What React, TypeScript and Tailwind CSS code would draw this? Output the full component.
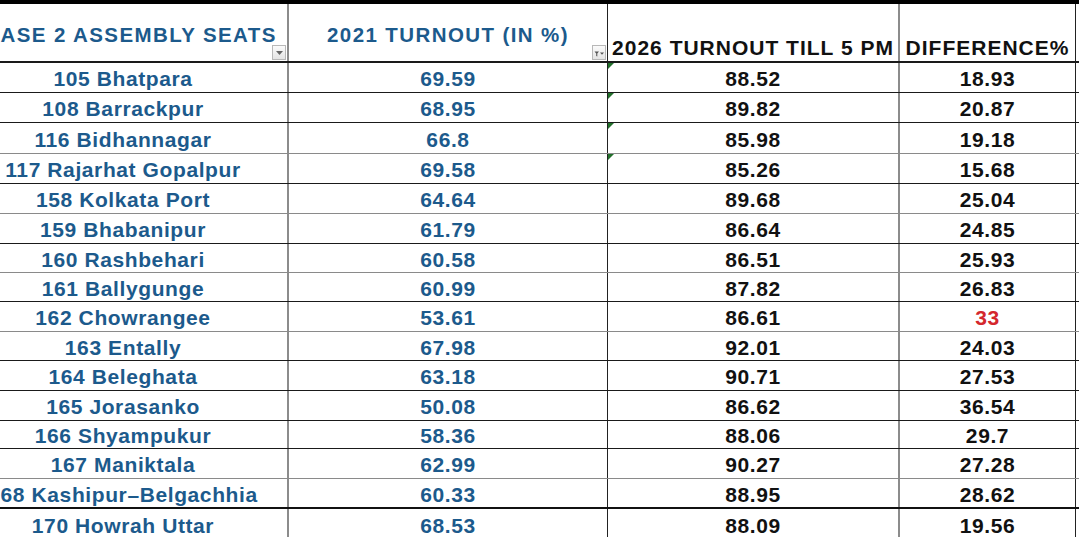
import React from "react";

type Row = {
  seat: string;
  t2021: string;
  t2026: string;
  diff: string;
  h: string;
  line: string;
  mark?: boolean;
  red?: boolean;
};

const ROWS: Row[] = [
  { seat: "105 Bhatpara", t2021: "69.59", t2026: "88.52", diff: "18.93", h: "h-[30px]", line: "border-b border-[#1a1a1a]", mark: true },
  { seat: "108 Barrackpur", t2021: "68.95", t2026: "89.82", diff: "20.87", h: "h-[30px]", line: "border-b border-[#1a1a1a]", mark: true },
  { seat: "116 Bidhannagar", t2021: "66.8", t2026: "85.98", diff: "19.18", h: "h-[31px]", line: "border-b border-[#8a8a8a]", mark: true },
  { seat: "117 Rajarhat Gopalpur", t2021: "69.58", t2026: "85.26", diff: "15.68", h: "h-[30px]", line: "border-b border-[#1a1a1a]", mark: true },
  { seat: "158 Kolkata Port", t2021: "64.64", t2026: "89.68", diff: "25.04", h: "h-[30px]", line: "border-b border-[#8a8a8a]" },
  { seat: "159 Bhabanipur", t2021: "61.79", t2026: "86.64", diff: "24.85", h: "h-[30px]", line: "border-b border-[#1a1a1a]" },
  { seat: "160 Rashbehari", t2021: "60.58", t2026: "86.51", diff: "25.93", h: "h-[29px]", line: "border-b border-[#8a8a8a]" },
  { seat: "161 Ballygunge", t2021: "60.99", t2026: "87.82", diff: "26.83", h: "h-[29px]", line: "border-b border-[#1a1a1a]" },
  { seat: "162 Chowrangee", t2021: "53.61", t2026: "86.61", diff: "33", h: "h-[30px]", line: "border-b border-[#8a8a8a]", red: true },
  { seat: "163 Entally", t2021: "67.98", t2026: "92.01", diff: "24.03", h: "h-[29px]", line: "border-b border-[#1a1a1a]" },
  { seat: "164 Beleghata", t2021: "63.18", t2026: "90.71", diff: "27.53", h: "h-[30px]", line: "border-b border-[#1a1a1a]" },
  { seat: "165 Jorasanko", t2021: "50.08", t2026: "86.62", diff: "36.54", h: "h-[30px]", line: "border-b border-[#1a1a1a]" },
  { seat: "166 Shyampukur", t2021: "58.36", t2026: "88.06", diff: "29.7", h: "h-[28px]", line: "border-b border-[#1a1a1a]" },
  { seat: "167 Maniktala", t2021: "62.99", t2026: "90.27", diff: "27.28", h: "h-[30px]", line: "border-b border-[#8a8a8a]" },
  { seat: "168 Kashipur–Belgachhia", t2021: "60.33", t2026: "88.95", diff: "28.62", h: "h-[30px]", line: "border-b-2 border-[#111]" },
  { seat: "170 Howrah Uttar", t2021: "68.53", t2026: "88.09", diff: "19.56", h: "h-[30px]", line: "" },
];

const FONT = "font-['Liberation_Sans',Arial,sans-serif] font-bold";
const COL1 = "w-[330px] shrink-0 border-r-2 border-[#8c8c8c]";
const COL2 = "w-[319px] shrink-0 border-r border-[#222]";
const COL3 = "w-[292px] shrink-0 border-r-2 border-[#8c8c8c]";
const COL4 = "w-[176px] shrink-0 border-r border-[#222]";

function DropButton({ filter }: { filter?: boolean }) {
  return (
    <div className="absolute bottom-[1px] right-[1px] flex h-[15px] w-[14px] items-center justify-center border border-[#b8b8b8] bg-gradient-to-b from-[#fbfbfb] to-[#e4e4e4]">
      {filter ? (
        <svg width="11" height="9" viewBox="0 0 11 9">
          <path d="M0.5 3.5h4.5l-1.7 2v3l-1.1-0.6v-2.4z" fill="#555" />
          <path d="M6 4.5h4l-2 2.2z" fill="#555" />
        </svg>
      ) : (
        <svg width="7" height="4" viewBox="0 0 7 4">
          <path d="M0 0h7L3.5 4z" fill="#666" />
        </svg>
      )}
    </div>
  );
}

export default function App() {
  return (
    <div className={`relative h-[537px] w-[1079px] overflow-hidden bg-white ${FONT}`}>
      <div className="h-[4px] bg-black" />
      <div className="ml-[-41px] flex flex-col">
        <div className="flex h-[59px] border-b-2 border-[#1a1a1a]">
          <div className={`${COL1} relative flex items-center justify-center pt-[6px] text-[20.5px] tracking-[1.4px] whitespace-nowrap text-[#1c5a8c]`}>
            PHASE 2 ASSEMBLY SEATS
            <DropButton />
          </div>
          <div className={`${COL2} relative flex items-center justify-center pt-[6px] text-[20.5px] tracking-[1.4px] whitespace-nowrap text-[#1c5a8c]`}>
            2021 TURNOUT (IN %)
            <DropButton filter />
          </div>
          <div className={`${COL3} flex items-end justify-center pb-[3px] text-[21px] leading-none tracking-[1px] whitespace-nowrap text-[#111]`}>
            2026 TURNOUT TILL 5 PM
          </div>
          <div className={`${COL4} flex items-end justify-center pb-[3px] text-[21px] leading-none tracking-[1px] whitespace-nowrap text-[#111]`}>
            DIFFERENCE%
          </div>
        </div>

        {ROWS.map((r) => (
          <div key={r.seat} className={`flex shrink-0 ${r.h} ${r.line} text-[21px] leading-none tracking-[0.6px] whitespace-nowrap`}>
            <div className={`${COL1} flex items-center justify-center pt-[2px] text-[#1c5a8c]`}>{r.seat}</div>
            <div className={`${COL2} flex items-center justify-center pt-[2px] text-[#1c5a8c]`}>{r.t2021}</div>
            <div className={`${COL3} relative flex items-center justify-center pt-[2px] text-[#111]`}>
              {r.mark ? (
                <div className="absolute left-0 top-0 h-0 w-0 border-r-[6px] border-t-[6px] border-r-transparent border-t-[#23702c]" />
              ) : null}
              {r.t2026}
            </div>
            <div className={`${COL4} flex items-center justify-center pt-[2px] ${r.red ? "text-[#d4272d]" : "text-[#111]"}`}>
              {r.diff}
            </div>
          </div>
        ))}
      </div>
    </div>
  );
}
